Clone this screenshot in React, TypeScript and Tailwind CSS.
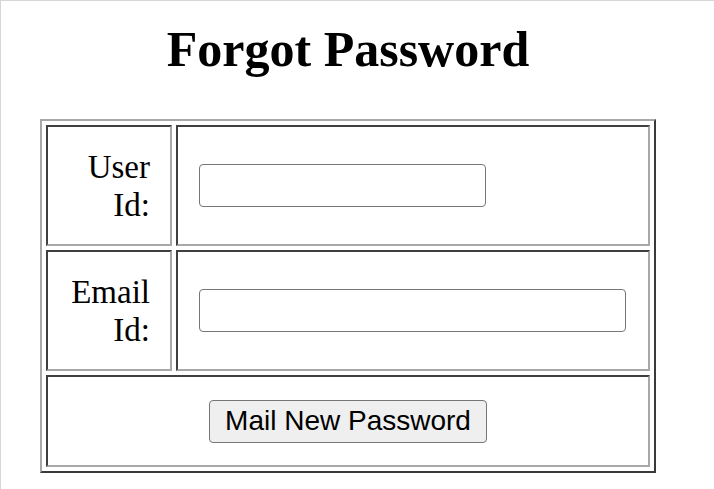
export default function App() {
  const cell =
    'border-2 border-t-[#3f3f3f] border-l-[#3f3f3f] border-b-[#a8a8a8] border-r-[#a8a8a8] bg-white';

  return (
    <div className="min-h-[489px] w-[714px] border-t border-l border-[#d6d6d6] bg-white">
      <div className="pl-[39px] pt-[19px]">
        <h1 className="w-[616px] text-center text-[50px] leading-[58px] font-bold text-black [font-family:'Liberation_Serif',serif]">
          Forgot Password
        </h1>

        <div className="mt-[41px] w-[616px] border-2 border-t-[#a8a8a8] border-l-[#a8a8a8] border-b-[#3a3a3a] border-r-[#3a3a3a] p-[4px]">
          <div className="grid grid-cols-[126px_1fr] grid-rows-[121px_121px_92px] gap-[4px]">
            <div className={`${cell} flex items-center justify-end px-[20px]`}>
              <span className="text-right text-[33px] leading-[38px] text-black [font-family:'Liberation_Serif',serif]">
                User Id:
              </span>
            </div>
            <div className={`${cell} flex items-center pl-[21px]`}>
              <input
                type="text"
                className="h-[43px] w-[287px] rounded-[4px] border-[1.5px] border-[#767676] bg-white px-2 outline-none"
              />
            </div>

            <div className={`${cell} flex items-center justify-end px-[20px]`}>
              <span className="text-right text-[33px] leading-[38px] text-black [font-family:'Liberation_Serif',serif]">
                Email Id:
              </span>
            </div>
            <div className={`${cell} flex items-center pl-[21px]`}>
              <input
                type="email"
                className="h-[43px] w-[427px] rounded-[4px] border-[1.5px] border-[#767676] bg-white px-2 outline-none"
              />
            </div>

            <div className={`${cell} col-span-2 flex items-center justify-center`}>
              <button
                type="button"
                className="h-[43px] w-[278px] rounded-[4px] border-[1.5px] border-[#767676] bg-[#efefef] text-[28px] leading-none text-black [font-family:'Liberation_Sans',Arial,sans-serif]"
              >
                Mail New Password
              </button>
            </div>
          </div>
        </div>
      </div>
    </div>
  );
}
